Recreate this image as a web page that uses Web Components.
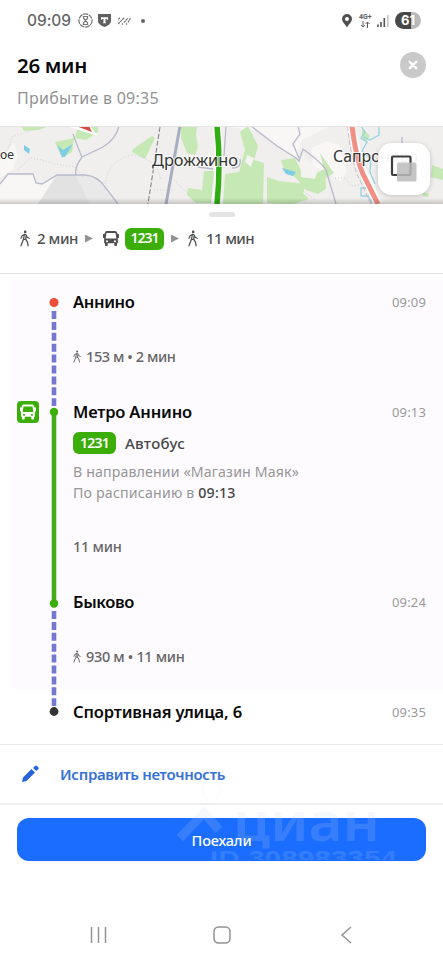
<!DOCTYPE html>
<html lang="ru"><head><meta charset="utf-8"><title>Маршрут</title>
<style>body{margin:0;background:#fff;font-family:"Noto Sans","Open Sans",sans-serif;color:#090909}</style></head>
<body><route-app></route-app>
<script>
const define = (name, html, init) => {
  const tpl = document.createElement('template');
  tpl.innerHTML = html;
  customElements.define(name, class extends HTMLElement {
    connectedCallback() {
      if (this.shadowRoot) return;
      this.attachShadow({mode: 'open'}).append(tpl.content.cloneNode(true));
      if (init) init(this, this.shadowRoot);
    }
  });
};

/* One line of text whose tracking is adjusted to span the width in "w". */
define('text-line', `<style>:host{display:block;white-space:nowrap;flex:none}span{display:inline-block}</style><span><slot></slot></span>`, (el, root) => {
  const w = +el.getAttribute('w'), span = root.querySelector('span');
  el.style.width = w + 'px';
  const n = el.textContent.trim().length;
  const ls = (w - span.getBoundingClientRect().width) / n;
  span.style.letterSpacing = ls.toFixed(3) + 'px';
});

define('walk-icon', `<style>:host{display:block;flex:none}svg{display:block;width:100%;height:100%}</style>
<svg viewBox="0 0 10 17" fill="none" stroke="currentColor" stroke-width="1.25" stroke-linecap="round" stroke-linejoin="round"><circle cx="5.2" cy="1.9" r="1.35" fill="currentColor" stroke="none"/><path d="M1 8.4 2 5.8 4.7 4.4 6.2 5 7.2 7.3 9.2 8.3M4.2 5 3.5 9.3 1 15.8M6.2 5.3 5.7 9.2 7.4 11.8 8.2 15.8M3.7 9.2 5.5 9.5"/></svg>`);

define('bus-icon', `<style>:host{display:block;flex:none}svg{display:block;width:100%;height:100%}</style>
<svg viewBox="0 0 17 17"><path fill="currentColor" fill-rule="evenodd" d="M4 .5h9q1.7 0 2.1 1.8l.3 1.4H17V8h-1.2v5.6h-.9v2.2q0 .7-.7.7h-1.5q-.7 0-.7-.7v-2.2H5v2.2q0 .7-.7.7H2.8q-.7 0-.7-.7v-2.2h-.9V8H0V3.700h1.600l.3-1.400Q2.300.5 4 .5ZM3.700 2.700 2.800 8.600h11.400l-.9-5.900ZM4.300 10.300a1.100 1.100 0 1 0 .01 0ZM12.700 10.300a1.100 1.100 0 1 0 .01 0Z"/></svg>`);

define('route-badge', `<style>:host{display:flex;align-items:center;justify-content:center;flex:none;box-sizing:border-box;height:22px;border-radius:6px;background:#3bae09;color:#fff;font-size:14px;font-weight:600;line-height:20px}</style><slot></slot>`);

define('status-bar', `<style>:host{display:flex;height:41px;box-sizing:border-box;padding:0 22px 0 27px;align-items:center;color:#666;font-family:Inter,Roboto,sans-serif;font-size:15.5px;font-weight:500}
svg{display:block}.sp{flex:1}.a{margin-left:7px}.bat{width:26px;height:17px;border-radius:9px;background:linear-gradient(90deg,#484848 61%,#b9b9b9 61%);color:#fff;font:700 13px/17px Inter,sans-serif;text-align:center;margin-left:6px}
.g{margin-left:7px;font:700 7px/7px Roboto,sans-serif;width:13px;color:#606060}</style>
<text-line w="44">09:09</text-line>
<svg class="a" width="15" height="15" viewBox="0 0 15 15" fill="none" stroke="#777"><circle cx="7.500" cy="7.500" r="6.600" stroke-width="1.200" stroke-dasharray="5 .7"/><path d="M4.800 3.500h5.400M4.800 11.500h5.400M5.500 3.500v1.700l4 4.600v1.700M9.500 3.500v1.700l-4 4.600v1.700" stroke-width="1.200"/></svg>
<svg width="13" height="13" viewBox="0 0 13 13" style="margin-left:5px"><path d="M0 0h13v7q0 3.500-6.500 6Q0 10.500 0 7Z" fill="#606060"/><path d="M3 3.200h7v2.600H9l-.3-.7H7.500v3.300l.7.300v.5H4.800v-.5l.7-.3V5.100H4.300l-.3.700H3Z" fill="#fff"/></svg>
<svg width="13" height="8" viewBox="0 0 13 8" style="margin-left:7px" stroke="#777" stroke-width="1.200"><path d="M0 2.500 2 .5M0 7 6.500.5M4 7.500l1-1M6 5.500l4-4.500M8 7.500l1-1M10 5.500l2.500-4.500" stroke-dasharray="2.500 .5"/></svg>
<svg width="4" height="4" style="margin-left:10px"><circle cx="2" cy="2" r="2" fill="#666"/></svg>
<span class="sp"></span>
<svg width="10" height="14" viewBox="0 0 10 14"><path fill="#505050" fill-rule="evenodd" d="M5 0a5 5 0 0 1 5 5c0 3-3 5-5 8.500C3 10 0 8 0 5a5 5 0 0 1 5-5Zm0 3a2 2 0 1 0 0 4 2 2 0 0 0 0-4Z"/></svg>
<div class="g"><span>4G+</span><svg width="12" height="7" viewBox="0 0 12 7" fill="none" stroke="#606060"><path d="M4 0v6M2 4l2 2 2-2M8.500 7V1M6.500 3l2-2 2 2"/></svg></div>
<svg width="12" height="13" viewBox="0 0 12 13" style="margin-left:5px"><path d="M1 10.500V13M4 8v5M7.300 4v9" stroke="#555" stroke-width="1.600"/><path d="M10.800 1v12" stroke="#c8c8c8" stroke-width="1.600"/></svg>
<div class="bat">61</div>`);

define('trip-header', `<style>:host{display:flex;height:85px;box-sizing:border-box;padding:10px 17px 0;justify-content:space-between}
.t{font-size:20.500px;font-weight:600;line-height:28px}.s{font-size:16px;line-height:22px;color:#929292;margin-top:8px}.x{display:block;margin:1px 0 0}</style>
<div><text-line class="t" w="70">26 мин</text-line><text-line class="s" w="142">Прибытие в 09:35</text-line></div>
<svg class="x" width="26" height="26"><circle cx="13" cy="13" r="13" fill="#c9c9c9"/><path d="m9.800 9.800 6.400 6.400m0-6.400-6.400 6.400" stroke="#fff" stroke-width="2.400" stroke-linecap="round"/></svg>`);

define('map-strip', `<style>:host{display:block;height:78px;position:relative;overflow:hidden}svg{display:block}.btn{position:absolute;left:378px;top:17px;width:52px;height:52px;border-radius:14px;background:#fffffff2;box-shadow:0 1px 5px #0003}</style>
<svg width="443" height="78" viewBox="0 126 443 78" font-family="Noto Sans" fill="#333">
<defs><linearGradient id="fade" x1="0" y1="0" x2="0" y2="1"><stop offset="0" stop-color="#000" stop-opacity="0"/><stop offset="1" stop-color="#000" stop-opacity=".18"/></linearGradient></defs>
<path fill="#f0efee" d="M0 126h443v78H0z"/>
<g fill="#f8f7f5"><path d="M0 184 8 174H33L36 183 42 184 56 175 38 204H0zM0 160l14-18 4 14-6 14-12 8zM311 148l16-7 12 4 8 25-6 12-14-10-14-6zM220 126h110l-28 14-6 18-40-28z"/></g>
<path fill="#e2e2e2" d="M57 175H76L90 204H38z"/><path fill="#e9e9e9" d="M76 175h9l15 6 17 23H90z"/>
<g fill="#c5e8b4"><path d="M55 142l19-4-2 14-10 6zM75 138l3-12h20v6l-12 8zM21 126h28l-10 4-15 1zM133 149l19-13 3 2-10 21-13-7zM181 126h16l-1 10 2 10-3 9-8-2-6-15zM204 171h10l-3 32h-15l-9-8 1-7 14 2zM240 132l8-6 10 20-4 14 10 3-1 41h-40l2-30 14-2 6-22zM281 160l14-2 6 13 11 4 13-6 1 20-8 5-12-4-10-12-12-8zM267 177l12 4 27 3-3 9 6 6-18 6-24-2zM320 153l14 20-8 5zM432 165l11 4v11l-12-3zM422 192l7 2-1 3-5-1zM362 128l8 8-4 6-4-5z"/></g>
<g fill="#f5f3ef"><path d="m301 154 11 10 6 5-3 10-14-2zM247 155l7 3-3 9-6-5z"/></g>
<g fill="#7fcde5"><path d="m24 145 6 4-1 5-5-4zM57 145l6 5 10-6-8 13h-3zM282 168l7 2 7 2-3 4-7-2z"/></g>
<g fill="none" stroke="#cfcedd" stroke-dasharray="1 2"><path d="M0 157 8 149 12 137 31 131M18 170 30 158 42 160 55 164 75 167 83 177M105 190q0-30 28-35 24 4 28 25M174 180l17 17M154 190h20M335 178l10 0 6 8 8-1M301 190l15 10"/></g>
<g fill="none" stroke="#b9bacc" stroke-width="1.300"><path d="M0 184 8 174H33L36 183 42 184 57 175H85Q98 176 105 187L118 204M119 126Q116 139 103 147L82 157Q74 168 76 175M73 134Q78 148 82 157M226 126 224 156M251 126 277 146 296 158 299 161 303 149Q322 163 326 170L336 204M298 126l2 8-7 10 6 14M198 167l15 2M402 137v8M232 168q10 0 8-9"/><path stroke="#a9adc2" stroke-width="3" d="M180 126 166 204"/></g>
<path d="M160 127 148 204" stroke="#8a8390" stroke-width="1.100" stroke-dasharray="5 2"/>
<path fill="none" stroke="#95d3e6" stroke-width="1.300" d="m361 126 4 6-4 6 6 4-5 9 9 8-1 13 5 12M379 126v9l-9 5-6-3M366 188l-5 0v8l7 0 4 7"/>
<path fill="none" stroke="#fff" stroke-width="8" d="M351 126 360 166 378 204"/><path fill="none" stroke="#f28f85" stroke-width="5" d="M352 126Q356 158 363 174L378 204"/>
<path fill="none" stroke="#c5bdc8" d="M347.500 126Q351 158 357 174L371 204" stroke-dasharray="5 2"/>
<path fill="none" stroke="#fff" stroke-width="8" d="M217 126Q221 165 216 204"/><path fill="none" stroke="#2fad12" stroke-width="5.500" d="M217 126Q221 165 217 204"/>
<path fill="#fff" d="M66 126h24l8 10z"/><path fill="#d94840" d="M76 126h13l3 6z"/>
<g stroke="#fff" stroke-width="2" paint-order="stroke" stroke-opacity=".75" font-size="15.500"><text x="0" y="159" font-size="12.500" textLength="14" lengthAdjust="spacingAndGlyphs">ое</text><text x="152" y="165.500" textLength="86" lengthAdjust="spacingAndGlyphs">Дрожжино</text><text x="333" y="161.500" textLength="85" lengthAdjust="spacingAndGlyphs">Сапроново</text></g>
<path d="M0 198h443v6H0z" fill="url(#fade)"/><path d="M0 126.500h443" stroke="#e4e4e4"/></svg>
<div class="btn"><svg width="52" height="52"><rect x="14" y="13.500" width="18.500" height="18.500" rx="1" fill="none" stroke="#3f3f3f" stroke-width="2.200"/><rect x="19" y="19.500" width="19.500" height="19" rx="1.500" fill="#bbb" fill-opacity=".85"/></svg></div>`);

define('trip-summary', `<style>:host{display:block;height:70px;box-sizing:border-box;border-bottom:1px solid #e8e8e8;padding-top:8px;color:#505050}
.h{width:26px;height:5px;border-radius:3px;background:#e4e4e4;margin:0 auto}.r{display:flex;align-items:center;padding-left:20px;height:28px;margin-top:7.500px;font-size:15px;font-weight:500;line-height:22px}
.p{width:8px;height:8px;background:#929292;clip-path:polygon(0 0,100% 50%,0 100%)}walk-icon{width:10px;height:17px}bus-icon{width:16px;height:17px}text-line{position:relative;top:-.5px}</style>
<div class="h"></div><div class="r"><walk-icon></walk-icon><text-line w="41" style="margin-left:7px">2 мин</text-line><i class="p" style="margin-left:7px"></i><bus-icon style="margin-left:9.500px"></bus-icon><route-badge style="width:39px;margin-left:6.500px"><text-line w="28">1231</text-line></route-badge><i class="p" style="margin-left:7px"></i><walk-icon style="margin-left:9px"></walk-icon><text-line w="48" style="margin-left:8px">11 мин</text-line></div>`);

/* Station row: name on the left, time on the right. */
define('route-stop', `<style>:host{display:flex;height:24px;align-items:center;justify-content:space-between;font-size:16.500px;line-height:24px;font-weight:600}
text-line[time]{font-size:13px;font-weight:400;color:#9a9a9a}</style><slot></slot><text-line time w="34"></text-line>`, (el, root) => {
  const t = root.querySelector('text-line');
  t.textContent = el.getAttribute('time');
  const span = t.shadowRoot.querySelector('span');
  span.style.letterSpacing = '0px';
  span.style.letterSpacing = ((34 - span.getBoundingClientRect().width) / 5) + 'px';
});

define('route-timeline', `<style>:host{display:grid;grid-template-columns:62px 1fr;height:471px;box-sizing:border-box;border-bottom:1px solid #e8e8e8;padding:0 17px 0 11px;background:linear-gradient(#fdfbfe,#fdfbfe) 11px 6px/432px 409px no-repeat}
.rail svg{display:block;margin-top:-1px}.rail{position:relative}.bus{position:absolute;left:6px;top:127px;width:22px;height:22px;box-sizing:border-box;border-radius:4px;background:#3bae09;color:#fff;padding:3px}
.bus bus-icon{width:16px;height:16px}.c{padding-top:16px}.m{display:flex;align-items:center;height:20px;font-size:14.500px;font-weight:500;color:#666;line-height:20px}
walk-icon{width:8px;height:13px;margin-right:5px}.line{display:flex;align-items:center;height:22px;margin-top:8px;color:#484848;font-size:15px;font-weight:500}.g{font-size:14.200px;line-height:21px;color:#969696}.g b{font-weight:500;color:#444}</style>
<div class="rail"><svg width="62" height="470"><g fill="none" stroke="#7478d0" stroke-width="4.600" stroke-dasharray="8 2.900"><path d="M43 38V133M43 338V433"/></g><path d="M43 139V330" stroke="#43ad1d" stroke-width="4.600"/><circle cx="43" cy="29.500" r="4.500" fill="#ed4e3a"/><circle cx="43" cy="139" r="4.200" fill="#3bae09"/><circle cx="43" cy="330.500" r="4.200" fill="#3bae09"/><circle cx="43" cy="438.500" r="4.400" fill="#333"/></svg><div class="bus"><bus-icon></bus-icon></div></div>
<div class="c"><route-stop time="09:09"><text-line w="61.500">Аннино</text-line></route-stop>
<div class="m" style="margin-top:32px"><walk-icon></walk-icon><text-line w="89.500">153 м • 2 мин</text-line></div>
<route-stop time="09:13" style="margin-top:34px"><text-line w="119">Метро Аннино</text-line></route-stop>
<div class="line"><route-badge style="width:43px"><text-line w="29">1231</text-line></route-badge><text-line w="60" style="margin-left:9px">Автобус</text-line></div>
<text-line class="g" w="226" style="margin-top:7px">В направлении «Магазин Маяк»</text-line><text-line class="g" w="162.500">По расписанию в <b>09:13</b></text-line>
<div class="m" style="margin-top:33px"><text-line w="48.500">11 мин</text-line></div>
<route-stop time="09:24" style="margin-top:34px"><text-line w="61">Быково</text-line></route-stop>
<div class="m" style="margin-top:32px"><walk-icon></walk-icon><text-line w="98.500">930 м • 11 мин</text-line></div>
<route-stop time="09:35" style="margin-top:34px"><text-line w="169">Спортивная улица, 6</text-line></route-stop></div>`);

define('fix-row', `<style>:host{display:flex;height:60px;box-sizing:border-box;border-bottom:2px solid #efefef;align-items:center;padding-left:21px;color:#3671d5;font-size:15px;font-weight:600;line-height:22px}svg{margin-right:21px}</style>
<svg width="18" height="18" viewBox="0 0 18 18" fill="#2465dd"><path d="M1 17 2 12.500 10.500 4 14 7.500 5.500 16 1 17zM12 3l2-2q1-1 2 0l1.200 1.200q1 1 0 2L15.300 6z"/></svg><text-line w="165">Исправить неточность</text-line>`);

define('go-button', `<style>:host{display:block;padding:13px 17px 0;height:95px;box-sizing:border-box;position:relative}
button{display:flex;align-items:center;justify-content:center;width:409px;height:43px;border:0;border-radius:12px;background:#1a6dff;color:#fff;font:500 14.500px/22px "Noto Sans",sans-serif;padding:0}
svg.w{position:absolute;left:170px;top:-31px}</style><button><text-line w="60">Поехали</text-line></button>
<svg class="w" width="250" height="92" viewBox="170 774 250 92" font-family="Liberation Sans" font-weight="700" pointer-events="none"><g fill="none" stroke="#cbd8ee" stroke-opacity=".17"><path stroke-width="9" d="M180 838 204 813 219 830"/><path stroke-width="3" stroke-opacity=".06" d="M211 805q-18-21 0-23 20 2 0 23"/></g><g fill="#cbd8ee" fill-opacity=".17"><text x="233" y="841" font-size="54" textLength="147" lengthAdjust="spacingAndGlyphs" font-family="Noto Sans" font-weight="600">циан</text><svg x="170" y="774" width="250" height="86" viewBox="170 774 250 86"><text x="210" y="866" font-size="22" textLength="187" lengthAdjust="spacingAndGlyphs">ID 308983354</text></svg></g></svg>`);

define('nav-bar', `<style>:host{display:flex;height:60px;box-sizing:border-box;padding:0 91px 0 90px;align-items:flex-start;justify-content:space-between}svg{display:block;margin-top:26px}svg:nth-of-type(2){margin-left:-3px}</style>
<svg width="17" height="18" fill="none" stroke="#929292" stroke-width="1.500"><path d="M1.500 1v16M8.500 1v16M15.500 1v16"/></svg><svg width="18" height="18" fill="none" stroke="#929292" stroke-width="1.500"><rect x="1" y="1" width="16" height="16" rx="4.500"/></svg><svg width="12" height="18" fill="none" stroke="#929292" stroke-width="1.500"><path d="M11 1 2 9l9 8"/></svg>`);

define('route-app', `<style>:host{display:flex;flex-direction:column;width:443px;height:960px;background:#fff}nav-bar{margin-top:auto}</style>
<status-bar></status-bar><trip-header></trip-header><map-strip></map-strip><trip-summary></trip-summary><route-timeline></route-timeline><fix-row></fix-row><go-button></go-button><nav-bar></nav-bar>`);
</script></body></html>
